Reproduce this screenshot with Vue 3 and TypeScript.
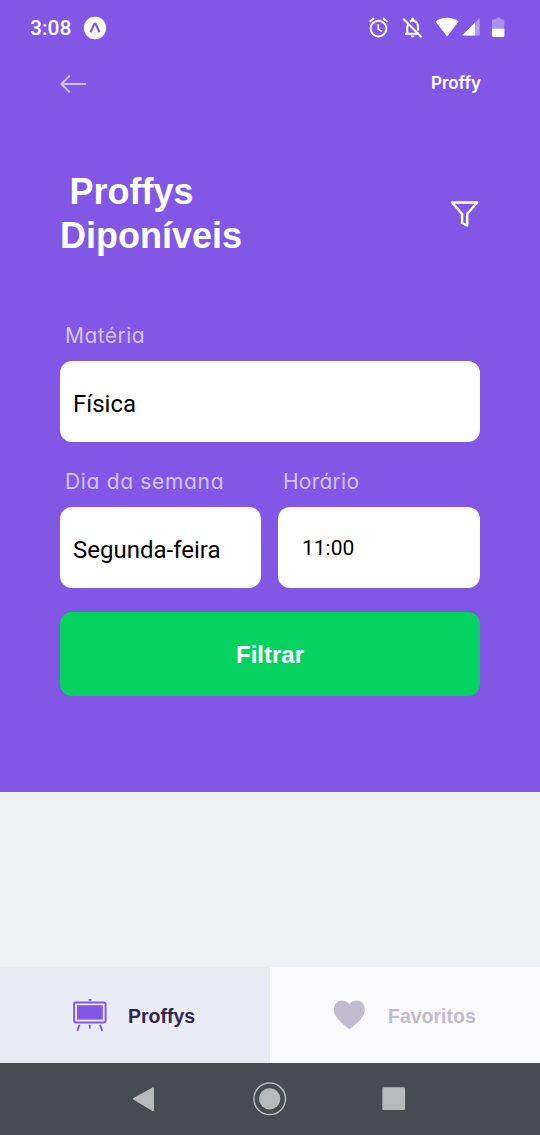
<script setup lang="ts">
import { ref } from 'vue'

type Tab = 'proffys' | 'favoritos'

const subject = ref<string>('Física')
const weekDay = ref<string>('Segunda-feira')
const time = ref<string>('11:00')
const activeTab = ref<Tab>('proffys')
</script>

<template>
  <div class="screen">
    <header class="top">
      <div class="status">
        <span class="clock">3:08</span>
        <svg class="expo" width="24" height="24" viewBox="0 0 24 24">
          <circle cx="12" cy="12" r="11.2" fill="#fff" />
          <path d="M7.600 16.300 11.400 7.800h1.200L16.400 16.300" fill="none" stroke="#8257e5" stroke-width="2.100" stroke-linejoin="miter" />
        </svg>
        <svg class="indicators" width="142" height="24" viewBox="0 0 142 24">
          <g fill="none" stroke="#fff" stroke-width="1.9">
            <circle cx="14.5" cy="12.6" r="7.9" />
            <path d="M14.3 8v5.2l3.6 2.2" stroke-width="1.6" />
            <path d="M5.6 5.8 10 2.2M19 2.2l4.4 3.6" />
          </g>
          <g fill="none" stroke="#fff" stroke-width="2">
            <path d="M39.3 2.8 57.6 21.2" />
            <path d="M44.2 8.2c-.8 1-.9 2.2-.9 3.6v5.9h9.6M41.2 17.7h13.6M45.8 5.7c4.1-2.4 8.2.5 8.2 5.1v3.6" />
          </g>
          <path d="M47.3 4.3V3.1a1.5 1.5 0 0 1 3 0v1.2zM46.6 19.4h4a2 2 0 0 1-4 0z" fill="#fff" />
          <path d="M71.6 5.6C78 .6 88.200.6 94.600 5.600L83.100 20.400z" fill="#fff" />
          <path d="M115.600 2v17.600H98z" fill="#b69df0" />
          <path d="M111 6.600v13H98z" fill="#fff" />
          <path d="M129.500 3.200h2.700V1.500h4v1.700h2.700q1.500 0 1.500 1.500v8.600h-12.400V4.700q0-1.500 1.500-1.500z" fill="#ab90ee" />
          <path d="M128 12.700h12.400v6.800q0 1.500-1.500 1.500h-9.400q-1.500 0-1.500-1.500z" fill="#fff" />
        </svg>
      </div>

      <div class="bar">
        <button class="plain" aria-label="Voltar">
          <svg width="28" height="20" viewBox="0 0 28 20" fill="none" stroke="#d4c2ff" stroke-width="2" stroke-linecap="round" stroke-linejoin="round">
            <path d="M25.400 10H1.500M9.300 2.100 1.400 10l7.900 7.900" />
          </svg>
        </button>
        <span class="brand">Proffy</span>
      </div>

      <div class="heading">
        <h1><span class="first">Proffys</span><br />Diponíveis</h1>
        <button class="plain" aria-label="Filtros">
          <svg width="30" height="28" viewBox="0 0 30 28" fill="none" stroke="#fff" stroke-width="2.400" stroke-linejoin="round">
            <path d="M2.200 2.500h25L17.200 14v11.500l-5.100-2.600V14z" />
          </svg>
        </button>
      </div>

      <form class="filters" @submit.prevent>
        <label class="field">
          <span class="label materia">Matéria</span>
          <span class="box">{{ subject }}</span>
        </label>
        <div class="row">
          <label class="field">
            <span class="label dia">Dia da semana</span>
            <span class="box">{{ weekDay }}</span>
          </label>
          <label class="field">
            <span class="label horario">Horário</span>
            <span class="box time">{{ time }}</span>
          </label>
        </div>
        <button class="submit" type="submit">Filtrar</button>
      </form>
    </header>

    <main class="list"></main>

    <nav class="tabs">
      <button class="tab" :class="{ active: activeTab === 'proffys' }" @click="activeTab = 'proffys'">
        <svg width="36" height="36" viewBox="0 0 36 36">
          <rect x="2.100" y="5.400" width="31.500" height="20" rx="1.800" fill="none" stroke="#8257e5" stroke-width="2" />
          <rect x="5" y="8.200" width="25.800" height="14.400" fill="#8257e5" />
          <path d="M17.200 2.900h1.600M7.300 28.600 5.600 33.200M17.800 28.400v2.400M28.300 28.600l1.700 4.600" fill="none" stroke="#8257e5" stroke-width="1.900" stroke-linecap="round" />
        </svg>
        <span class="name">Proffys</span>
      </button>
      <button class="tab" :class="{ active: activeTab === 'favoritos' }" @click="activeTab = 'favoritos'">
        <svg class="heart" width="36" height="36" viewBox="0 0 36 36">
          <path d="M18.300 32.300C9 25 2.900 20 2.900 12.200 2.900 7 6.500 3.500 11 3.500c3.200 0 5.900 1.500 7.300 4.100 1.500-2.600 4.200-4.100 7.400-4.100 4.500 0 8.100 3.500 8.100 8.700 0 7.800-6.200 12.800-15.500 20.100z" fill="#c1bccc" />
        </svg>
        <span class="name">Favoritos</span>
      </button>
    </nav>

    <footer class="system">
      <svg width="540" height="72" viewBox="0 0 540 72" fill="#b6baba">
        <path d="M134 35.800 153 25.400v21.800z" stroke="#b6baba" stroke-width="2" stroke-linejoin="round" />
        <circle cx="269.700" cy="35.800" r="15.800" fill="none" stroke="#b6baba" stroke-width="1.500" />
        <circle cx="269.700" cy="35.800" r="10.600" />
        <rect x="382.300" y="24.300" width="22.800" height="22.800" rx="1.600" />
      </svg>
    </footer>
  </div>
</template>

<style>
body {
  margin: 0;
}
</style>

<style scoped>
.screen {
  width: 540px;
  height: 1135px;
  display: flex;
  flex-direction: column;
  overflow: hidden;
  background: #f0f0f7;
  font-family: "Liberation Sans", sans-serif;
}

button {
  border: 0;
  padding: 0;
  background: none;
  font-family: inherit;
}

.plain {
  display: flex;
}

.top {
  height: 792px;
  box-sizing: border-box;
  padding: 0 60px;
  background: #8257e5;
  color: #fff;
}

.status {
  height: 56px;
  margin: 0 -30px;
  display: flex;
  align-items: center;
}

.clock {
  font: 500 21px/24px Roboto, sans-serif;
  width: 53px;
}

.indicators {
  margin-left: auto;
  margin-right: 4px;
}

.bar {
  height: 56px;
  display: flex;
  align-items: center;
  justify-content: space-between;
}

.brand {
  font: 600 17px/24px Inter, sans-serif;
  letter-spacing: -0.050px;
  margin: -2px -1px 0 0;
}

.heading {
  height: 88px;
  margin-top: 58px;
  display: flex;
  align-items: center;
  justify-content: space-between;
}

h1 {
  margin: 0;
  font-size: 36px;
  line-height: 44px;
  font-weight: 700;
}

.first {
  margin-left: 9.500px;
}

.filters {
  margin-top: 62px;
}

.field {
  flex: 1;
  display: flex;
  flex-direction: column;
}

.label {
  box-sizing: border-box;
  height: 41px;
  padding-top: 1px;
  line-height: 30px;
  padding-left: 5px;
  font-family: Inter, sans-serif;
  font-size: 21px;
  font-feature-settings: "cv11";
  color: #d4c2ff;
}

.materia {
  letter-spacing: 0.450px;
}

.dia {
  letter-spacing: 0.670px;
}

.horario {
  letter-spacing: 0.250px;
}

.box {
  height: 81px;
  box-sizing: border-box;
  padding: 4px 13px 0;
  border-radius: 12px;
  display: flex;
  align-items: center;
  background: #fff;
  color: #000;
  font: 24px/30px Roboto, sans-serif;
}

.time {
  padding: 1px 24px 0;
  font-size: 21px;
}

.row {
  display: grid;
  grid-template-columns: 201px 202px;
  gap: 17px;
  margin-top: 24px;
}

.submit {
  width: 100%;
  height: 84px;
  margin-top: 24px;
  padding-top: 2px;
  border-radius: 12px;
  background: #04d361;
  color: #fff;
  font-size: 24px;
  font-weight: 700;
}

.list {
  height: 175px;
}

.tabs {
  height: 96px;
  display: grid;
  grid-template-columns: 270px 270px;
}

.tab {
  box-sizing: border-box;
  display: flex;
  align-items: center;
  padding-left: 72px;
  gap: 20px;
  background: #fafafc;
  color: #c1bccc;
  font-size: 19.500px;
  font-weight: 700;
}

.tab + .tab {
  padding-left: 61px;
  gap: 21px;
}

.name {
  padding-top: 2px;
}

.tab.active {
  background: #ebebf5;
  color: #32264d;
}

.system {
  height: 72px;
  background: #454d52;
}

.system svg {
  display: block;
}
</style>
